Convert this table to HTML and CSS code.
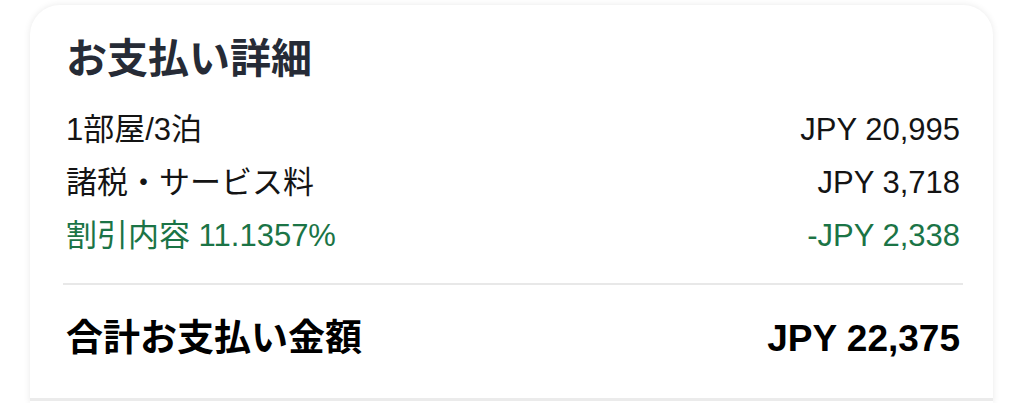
FILE: index.html
```html
<!DOCTYPE html>
<html lang="ja">
<head>
<meta charset="utf-8">
<link rel="stylesheet" href="styles.css">
</head>
<body>
<div class="card">
  <h2 class="title">お支払い詳細</h2>
  <div class="rows">
    <div class="row"><span>1部屋/3泊</span><span>JPY 20,995</span></div>
    <div class="row"><span>諸税・サービス料</span><span>JPY 3,718</span></div>
    <div class="row discount"><span>割引内容 11.1357%</span><span>-JPY 2,338</span></div>
  </div>
  <div class="divider"></div>
  <div class="row total"><span>合計お支払い金額</span><span>JPY 22,375</span></div>
  <div class="footer-line"></div>
</div>
</body>
</html>
```
FILE: styles.css
```css
html, body {
  margin: 0;
  padding: 0;
  background: #ffffff;
  overflow: hidden;
}
body {
  font-family: "Liberation Sans", "Noto Sans CJK JP", sans-serif;
  color: #111111;
  padding: 5px 31px 0 30px;
}
.card {
  box-sizing: border-box;
  background: #ffffff;
  border-radius: 30px 30px 0 0;
  box-shadow: 0 0 7px rgba(0, 0, 0, 0.09);
  padding: 30px 33px 0 36px;
  height: 398px;
  overflow: hidden;
}
.title {
  margin: 0;
  font-size: 41px;
  line-height: 48px;
  font-weight: 700;
  color: #262b36;
}
.rows {
  margin-top: 20px;
  display: flex;
  flex-direction: column;
}
.row {
  display: flex;
  justify-content: space-between;
  align-items: center;
  font-size: 31px;
  line-height: 53px;
  color: #141414;
}
.discount {
  color: #1b7446;
}
.divider {
  margin: 21px -3px 0 -3px;
  height: 2px;
  background: #e8e8e8;
}
.total {
  margin-top: 27px;
  font-size: 37px;
  font-weight: 700;
  color: #000000;
}
.footer-line {
  margin: 33px -33px 0 -36px;
  height: 3px;
  background: #ebebeb;
}
```
